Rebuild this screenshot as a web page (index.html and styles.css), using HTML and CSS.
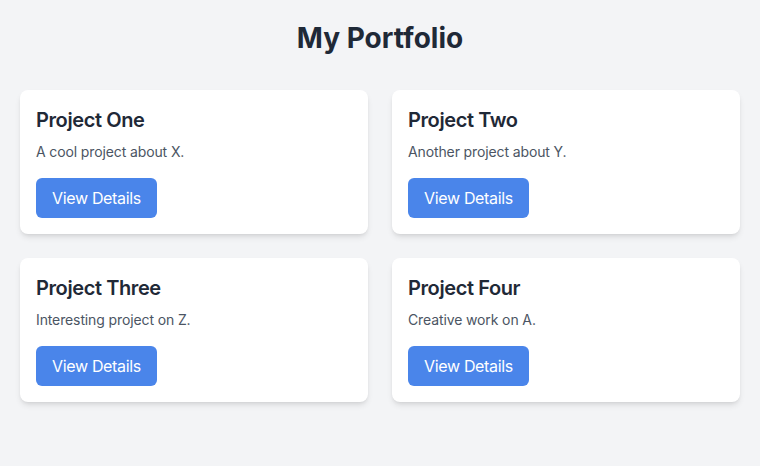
FILE: index.html
```html
<!DOCTYPE html>
<html lang="en">
<head>
<meta charset="utf-8">
<title>My Portfolio</title>
<link rel="stylesheet" href="styles.css">
</head>
<body>
<main class="page">
  <h1 class="page-title">My Portfolio</h1>
  <div class="grid">
    <div class="card">
      <h2 class="card-title">Project One</h2>
      <p class="card-desc">A cool project about X.</p>
      <button class="btn">View Details</button>
    </div>
    <div class="card">
      <h2 class="card-title">Project Two</h2>
      <p class="card-desc">Another project about Y.</p>
      <button class="btn">View Details</button>
    </div>
    <div class="card">
      <h2 class="card-title">Project Three</h2>
      <p class="card-desc">Interesting project on Z.</p>
      <button class="btn">View Details</button>
    </div>
    <div class="card">
      <h2 class="card-title">Project Four</h2>
      <p class="card-desc">Creative work on A.</p>
      <button class="btn">View Details</button>
    </div>
  </div>
</main>
</body>
</html>
```

FILE: styles.css
```css
* { box-sizing: border-box; }
html, body { margin: 0; padding: 0; }
body {
  background: #f3f4f6;
  font-family: Inter, "Noto Sans", sans-serif;
  color: #1f2937;
}
.page {
  padding: 20px;
}
.page-title {
  margin: 0 0 34px;
  text-align: center;
  font-size: 28px;
  line-height: 36px;
  font-weight: 700;
  color: #1f2937;
}
.grid {
  display: grid;
  grid-template-columns: 1fr 1fr;
  gap: 24px;
}
.card {
  background: #fff;
  border-radius: 8px;
  padding: 16px;
  box-shadow: 0 4px 6px -1px rgba(0,0,0,0.1), 0 2px 4px -2px rgba(0,0,0,0.1);
}
.card-title {
  margin: 0 0 8px;
  padding-top: 1px;
  font-size: 20px;
  line-height: 27px;
  font-weight: 600;
  letter-spacing: -0.4px;
  color: #1f2937;
}
.card-desc {
  margin: 0 0 16px;
  font-size: 14px;
  line-height: 20px;
  letter-spacing: -0.12px;
  color: #4b5563;
}
.btn {
  display: inline-block;
  border: 0;
  border-radius: 6px;
  background: #4a85ea;
  color: #fff;
  font-family: inherit;
  font-size: 16px;
  line-height: 24px;
  letter-spacing: -0.33px;
  padding: 8px 16px;
  cursor: pointer;
}
```
